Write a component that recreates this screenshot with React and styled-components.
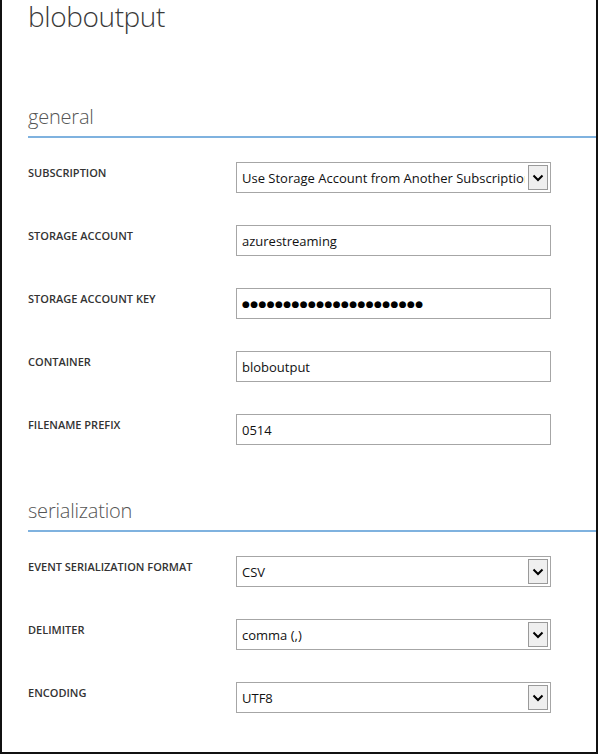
import React from "react";
import styled, { createGlobalStyle } from "styled-components";

const GlobalStyle = createGlobalStyle`
  html, body {
    margin: 0;
    padding: 0;
    background: #ffffff;
  }
  body {
    font-family: "Open Sans", "Liberation Sans", sans-serif;
    color: #222;
  }
`;

const Frame = styled.div`
  box-sizing: border-box;
  width: 598px;
  height: 754px;
  border: 2px solid #111;
  border-top: none;
  padding-left: 26px;
  background: #fff;
  overflow: hidden;
`;

const Title = styled.h1`
  margin: 0 0 73px;
  font-size: 28px;
  line-height: 32px;
  letter-spacing: -0.4px;
  font-weight: 300;
  color: #3a3a3a;
`;

const Section = styled.section`
  & + & {
    margin-top: 54px;
  }
`;

const SectionHeader = styled.h2`
  margin: 0;
  padding-bottom: 7px;
  border-bottom: 2px solid #7fb2df;
  font-size: 20px;
  line-height: 24px;
  letter-spacing: -0.2px;
  font-weight: 300;
  color: #555;
`;

const Fields = styled.div`
  display: grid;
  grid-template-columns: 208px 315px;
  row-gap: 32px;
  margin-top: 24px;
`;

const Label = styled.div`
  padding-top: 4px;
  font-size: 11px;
  line-height: 14px;
  font-weight: 600;
  color: #333;
  text-transform: uppercase;
  white-space: nowrap;
`;

const Box = styled.div`
  box-sizing: border-box;
  position: relative;
  height: 31px;
  border: 1px solid #a6a6a6;
  background: #fff;
  display: flex;
  align-items: center;
  padding-left: 5px;
  padding-right: ${(p) => (p.$select ? "25px" : "5px")};
  font-size: 13px;
  color: #111;
`;

const Value = styled.span`
  white-space: nowrap;
  overflow: hidden;
  flex: 1;
`;

const Dots = styled.span`
  font-family: "DejaVu Sans", sans-serif;
  font-size: 9px;
  letter-spacing: 0.4px;
  color: #000;
`;

const ArrowButton = styled.div`
  box-sizing: border-box;
  position: absolute;
  top: 2px;
  right: 2px;
  bottom: 2px;
  width: 20px;
  border: 1px solid #9a9a9a;
  background: #efefef;
  display: flex;
  align-items: center;
  justify-content: center;
`;

const Chevron = () => (
  <svg width="12" height="8" viewBox="0 0 12 8">
    <path d="M1.5 1.5 L6 6 L10.5 1.5" fill="none" stroke="#000" strokeWidth="2" />
  </svg>
);

const Field = ({ label, value, select, secret }) => (
  <>
    <Label>{label}</Label>
    <Box $select={select}>
      {secret ? <Dots>{"●".repeat(22)}</Dots> : <Value>{value}</Value>}
      {select && (
        <ArrowButton>
          <Chevron />
        </ArrowButton>
      )}
    </Box>
  </>
);

export default function App() {
  return (
    <>
      <GlobalStyle />
      <Frame>
        <Title>bloboutput</Title>
        <Section>
          <SectionHeader>general</SectionHeader>
          <Fields>
            <Field
              label="Subscription"
              value="Use Storage Account from Another Subscription"
              select
            />
            <Field label="Storage Account" value="azurestreaming" />
            <Field label="Storage Account Key" secret />
            <Field label="Container" value="bloboutput" />
            <Field label="Filename Prefix" value="0514" />
          </Fields>
        </Section>
        <Section>
          <SectionHeader>serialization</SectionHeader>
          <Fields>
            <Field label="Event Serialization Format" value="CSV" select />
            <Field label="Delimiter" value="comma (,)" select />
            <Field label="Encoding" value="UTF8" select />
          </Fields>
        </Section>
      </Frame>
    </>
  );
}
